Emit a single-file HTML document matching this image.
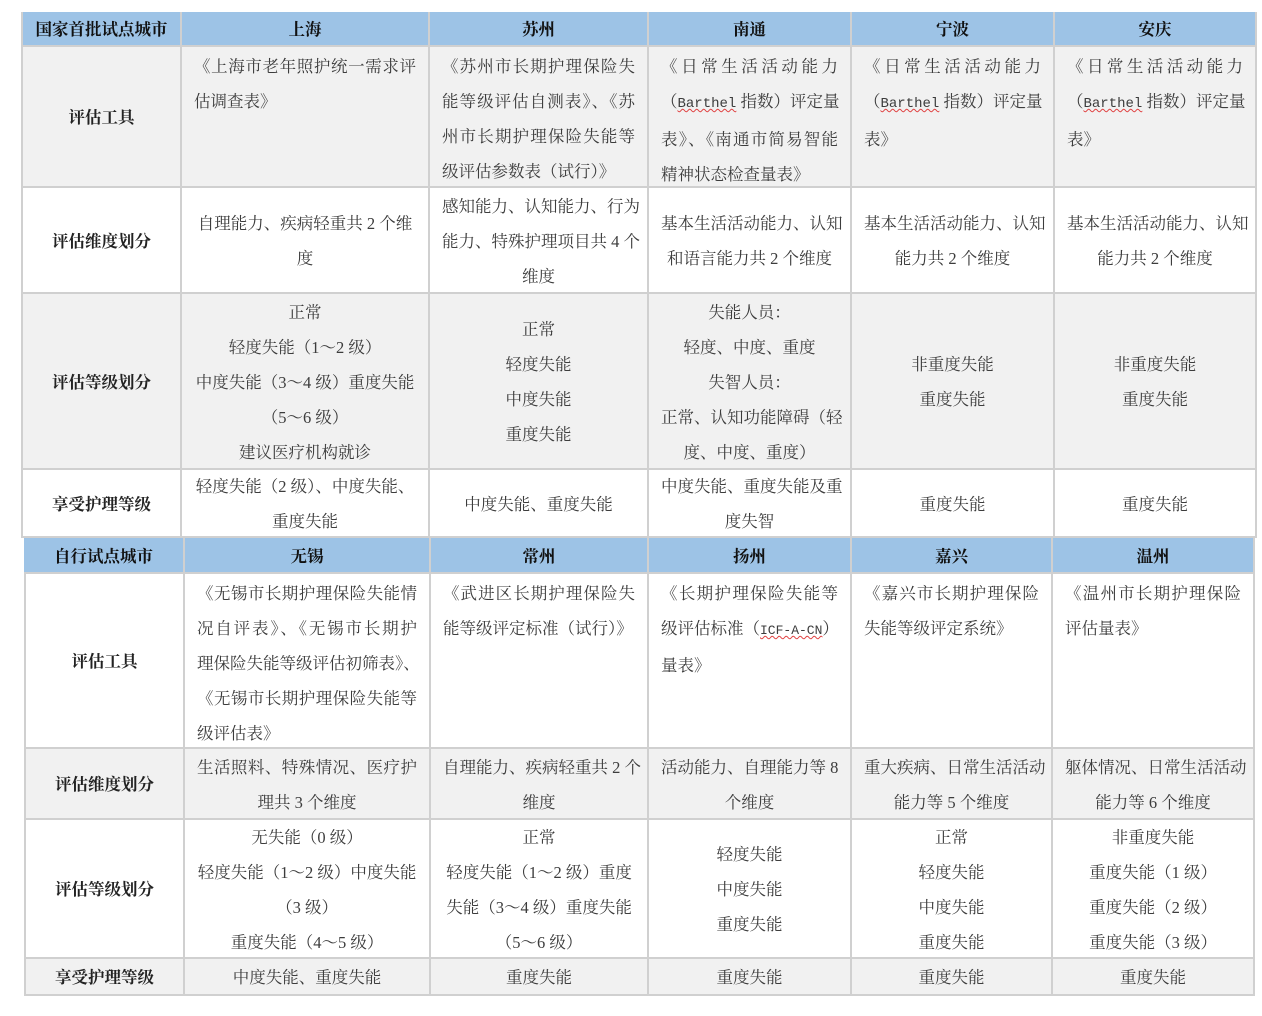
<!DOCTYPE html>
<html><head><meta charset="utf-8"><style>
body{margin:0;width:1262px;height:1016px;background:#fff;position:relative;overflow:hidden;font-family:"Liberation Serif","Noto Serif CJK SC",serif;color:#3c3c3c;font-size:16.5px}
.c{position:absolute;box-sizing:border-box;border-right:2px solid #d0d0d0;border-bottom:2px solid #d0d0d0;display:flex;flex-direction:column;justify-content:center;padding:2px 12px 0}
.t{justify-content:flex-start}
.c div{line-height:35px;text-align:center;white-space:nowrap}
.c div.j{text-align:justify;text-align-last:justify}
.c div.l{text-align:left}
.h{background:#9dc3e6;color:#111;font-weight:bold}
.g{background:#f1f1f1}
.b{font-weight:bold;color:#222}
.m{font-family:"Liberation Mono",monospace;font-size:14px;text-decoration:underline wavy #e04040;text-decoration-thickness:1px}
</style></head><body>
<!-- table 1 -->
<div class="c h" style="left:21px;top:12px;width:161px;height:35px;border-left:2px solid #d0d0d0"><div>国家首批试点城市</div></div>
<div class="c h" style="left:182px;top:12px;width:248px;height:35px"><div>上海</div></div>
<div class="c h" style="left:430px;top:12px;width:219px;height:35px"><div>苏州</div></div>
<div class="c h" style="left:649px;top:12px;width:203px;height:35px"><div>南通</div></div>
<div class="c h" style="left:852px;top:12px;width:203px;height:35px"><div>宁波</div></div>
<div class="c h" style="left:1055px;top:12px;width:202px;height:35px"><div>安庆</div></div>

<div class="c g b" style="left:21px;top:47px;width:161px;height:141px;border-left:2px solid #d0d0d0"><div>评估工具</div></div>
<div class="c g t" style="left:182px;top:47px;width:248px;height:141px"><div class="j">《上海市老年照护统一需求评</div><div class="l">估调查表》</div></div>
<div class="c g t" style="left:430px;top:47px;width:219px;height:141px"><div class="j">《苏州市长期护理保险失</div><div class="j">能等级评估自测表》、《苏</div><div class="j">州市长期护理保险失能等</div><div class="l">级评估参数表（试行）》</div></div>
<div class="c g t" style="left:649px;top:47px;width:203px;height:141px"><div class="j">《日常生活活动能力</div><div class="j">（<span class="m">Barthel</span> 指数）评定量</div><div class="j">表》、《南通市简易智能</div><div class="l">精神状态检查量表》</div></div>
<div class="c g t" style="left:852px;top:47px;width:203px;height:141px"><div class="j">《日常生活活动能力</div><div class="j">（<span class="m">Barthel</span> 指数）评定量</div><div class="l">表》</div></div>
<div class="c g t" style="left:1055px;top:47px;width:202px;height:141px"><div class="j">《日常生活活动能力</div><div class="j">（<span class="m">Barthel</span> 指数）评定量</div><div class="l">表》</div></div>

<div class="c b" style="left:21px;top:188px;width:161px;height:106px;border-left:2px solid #d0d0d0"><div>评估维度划分</div></div>
<div class="c" style="left:182px;top:188px;width:248px;height:106px"><div>自理能力、疾病轻重共 2 个维</div><div>度</div></div>
<div class="c" style="left:430px;top:188px;width:219px;height:106px"><div class="j">感知能力、认知能力、行为</div><div class="j">能力、特殊护理项目共 4 个</div><div>维度</div></div>
<div class="c" style="left:649px;top:188px;width:203px;height:106px"><div>基本生活活动能力、认知</div><div>和语言能力共 2 个维度</div></div>
<div class="c" style="left:852px;top:188px;width:203px;height:106px"><div>基本生活活动能力、认知</div><div>能力共 2 个维度</div></div>
<div class="c" style="left:1055px;top:188px;width:202px;height:106px"><div>基本生活活动能力、认知</div><div>能力共 2 个维度</div></div>

<div class="c g b" style="left:21px;top:294px;width:161px;height:176px;border-left:2px solid #d0d0d0"><div>评估等级划分</div></div>
<div class="c g" style="left:182px;top:294px;width:248px;height:176px"><div>正常</div><div>轻度失能（1～2 级）</div><div>中度失能（3～4 级）重度失能</div><div>（5～6 级）</div><div>建议医疗机构就诊</div></div>
<div class="c g" style="left:430px;top:294px;width:219px;height:176px"><div>正常</div><div>轻度失能</div><div>中度失能</div><div>重度失能</div></div>
<div class="c g" style="left:649px;top:294px;width:203px;height:176px"><div>失能人员：</div><div>轻度、中度、重度</div><div>失智人员：</div><div>正常、认知功能障碍（轻</div><div>度、中度、重度）</div></div>
<div class="c g" style="left:852px;top:294px;width:203px;height:176px"><div>非重度失能</div><div>重度失能</div></div>
<div class="c g" style="left:1055px;top:294px;width:202px;height:176px"><div>非重度失能</div><div>重度失能</div></div>

<div class="c b" style="left:21px;top:470px;width:161px;height:68px;border-left:2px solid #d0d0d0"><div>享受护理等级</div></div>
<div class="c" style="left:182px;top:470px;width:248px;height:68px"><div>轻度失能（2 级）、中度失能、</div><div>重度失能</div></div>
<div class="c" style="left:430px;top:470px;width:219px;height:68px"><div>中度失能、重度失能</div></div>
<div class="c" style="left:649px;top:470px;width:203px;height:68px"><div>中度失能、重度失能及重</div><div>度失智</div></div>
<div class="c" style="left:852px;top:470px;width:203px;height:68px"><div>重度失能</div></div>
<div class="c" style="left:1055px;top:470px;width:202px;height:68px"><div>重度失能</div></div>

<!-- table 2 -->
<div class="c h" style="left:24px;top:538px;width:161px;height:36px"><div>自行试点城市</div></div>
<div class="c h" style="left:185px;top:538px;width:246px;height:36px"><div>无锡</div></div>
<div class="c h" style="left:431px;top:538px;width:218px;height:36px"><div>常州</div></div>
<div class="c h" style="left:649px;top:538px;width:203px;height:36px"><div>扬州</div></div>
<div class="c h" style="left:852px;top:538px;width:201px;height:36px"><div>嘉兴</div></div>
<div class="c h" style="left:1053px;top:538px;width:202px;height:36px"><div>温州</div></div>

<div class="c b" style="left:24px;top:574px;width:161px;height:175px;border-left:2px solid #d0d0d0"><div>评估工具</div></div>
<div class="c t" style="left:185px;top:574px;width:246px;height:175px"><div class="j">《无锡市长期护理保险失能情</div><div class="j">况自评表》、《无锡市长期护</div><div class="j">理保险失能等级评估初筛表》、</div><div class="j">《无锡市长期护理保险失能等</div><div class="l">级评估表》</div></div>
<div class="c t" style="left:431px;top:574px;width:218px;height:175px"><div class="j">《武进区长期护理保险失</div><div class="l">能等级评定标准（试行）》</div></div>
<div class="c t" style="left:649px;top:574px;width:203px;height:175px"><div class="j">《长期护理保险失能等</div><div class="j">级评估标准（<span class="m" style="font-size:13px">ICF-A-CN</span>）</div><div class="l">量表》</div></div>
<div class="c t" style="left:852px;top:574px;width:201px;height:175px"><div class="j">《嘉兴市长期护理保险</div><div class="l">失能等级评定系统》</div></div>
<div class="c t" style="left:1053px;top:574px;width:202px;height:175px"><div class="j">《温州市长期护理保险</div><div class="l">评估量表》</div></div>

<div class="c g b" style="left:24px;top:749px;width:161px;height:71px;border-left:2px solid #d0d0d0"><div>评估维度划分</div></div>
<div class="c g" style="left:185px;top:749px;width:246px;height:71px"><div class="j">生活照料、特殊情况、医疗护</div><div>理共 3 个维度</div></div>
<div class="c g" style="left:431px;top:749px;width:218px;height:71px"><div>自理能力、疾病轻重共 2 个</div><div>维度</div></div>
<div class="c g" style="left:649px;top:749px;width:203px;height:71px"><div>活动能力、自理能力等 8</div><div>个维度</div></div>
<div class="c g" style="left:852px;top:749px;width:201px;height:71px"><div>重大疾病、日常生活活动</div><div>能力等 5 个维度</div></div>
<div class="c g" style="left:1053px;top:749px;width:202px;height:71px"><div>躯体情况、日常生活活动</div><div>能力等 6 个维度</div></div>

<div class="c b" style="left:24px;top:820px;width:161px;height:139px;border-left:2px solid #d0d0d0"><div>评估等级划分</div></div>
<div class="c" style="left:185px;top:820px;width:246px;height:139px"><div>无失能（0 级）</div><div>轻度失能（1～2 级）中度失能</div><div>（3 级）</div><div>重度失能（4～5 级）</div></div>
<div class="c" style="left:431px;top:820px;width:218px;height:139px"><div>正常</div><div>轻度失能（1～2 级）重度</div><div>失能（3～4 级）重度失能</div><div>（5～6 级）</div></div>
<div class="c" style="left:649px;top:820px;width:203px;height:139px"><div>轻度失能</div><div>中度失能</div><div>重度失能</div></div>
<div class="c" style="left:852px;top:820px;width:201px;height:139px"><div>正常</div><div>轻度失能</div><div>中度失能</div><div>重度失能</div></div>
<div class="c" style="left:1053px;top:820px;width:202px;height:139px"><div>非重度失能</div><div>重度失能（1 级）</div><div>重度失能（2 级）</div><div>重度失能（3 级）</div></div>

<div class="c g b" style="left:24px;top:959px;width:161px;height:37px;border-left:2px solid #d0d0d0"><div>享受护理等级</div></div>
<div class="c g" style="left:185px;top:959px;width:246px;height:37px"><div>中度失能、重度失能</div></div>
<div class="c g" style="left:431px;top:959px;width:218px;height:37px"><div>重度失能</div></div>
<div class="c g" style="left:649px;top:959px;width:203px;height:37px"><div>重度失能</div></div>
<div class="c g" style="left:852px;top:959px;width:201px;height:37px"><div>重度失能</div></div>
<div class="c g" style="left:1053px;top:959px;width:202px;height:37px"><div>重度失能</div></div>
</body></html>
